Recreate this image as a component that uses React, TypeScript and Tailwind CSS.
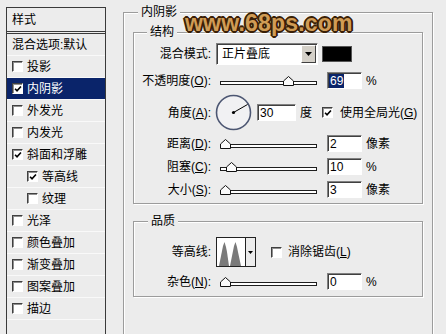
import React from "react";

const FONT = "font-['Liberation_Sans','Noto_Sans_CJK_SC',sans-serif]";

const LIST = [
  { label: "混合选项:默认", box: false },
  { label: "投影", box: true },
  { label: "内阴影", box: true, on: true, sel: true },
  { label: "外发光", box: true },
  { label: "内发光", box: true },
  { label: "斜面和浮雕", box: true, on: true },
  { label: "等高线", box: true, on: true, sub: true },
  { label: "纹理", box: true, sub: true },
  { label: "光泽", box: true },
  { label: "颜色叠加", box: true },
  { label: "渐变叠加", box: true },
  { label: "图案叠加", box: true },
  { label: "描边", box: true },
];

const Check = ({ on }: { on?: boolean }) => (
  <span className="relative inline-flex h-[11px] w-[11px] shrink-0 border border-t-[#404040] border-l-[#404040] border-r-white border-b-white bg-white shadow-[inset_1px_1px_0_#909090]">
    {on && (
      <svg viewBox="0 0 9 9" className="absolute left-[1px] top-[1px] h-[8px] w-[8px]">
        <path d="M1.2 4.2 L3.4 6.6 L7.8 1.6" stroke="#000" strokeWidth="1.8" fill="none" />
      </svg>
    )}
  </span>
);

const NumBox = ({ v, sel, w = 35 }: { v: string; sel?: boolean; w?: number }) => (
  <div
    className="flex h-[17px] items-center border border-t-[#808080] border-l-[#808080] border-r-white border-b-white bg-white pl-[1px] text-[12px] leading-none shadow-[inset_1px_1px_0_#404040]"
    style={{ width: w }}
  >
    <span className={sel ? "bg-[#0a246a] px-[1px] py-[1px] text-white" : "px-[1px]"}>{v}</span>
  </div>
);

const Slider = ({ at }: { at: number }) => (
  <div className="relative ml-[9px] h-[10px] w-[97px] shrink-0">
    <div className="absolute bottom-[1px] left-0 right-0 h-[4px] border border-[#1e1e1e] bg-white" />
    <svg className="absolute bottom-0" style={{ left: at }} width="11" height="10" viewBox="0 0 11 10">
      <path d="M0.5 9.5V5L5.5 0.5L10.5 5V9.5Z" fill="#fafafa" stroke="#111" />
    </svg>
  </div>
);

const Label = ({ children }: { children: React.ReactNode }) => (
  <div className="w-[77px] shrink-0 text-right text-[12px] leading-none whitespace-nowrap">{children}</div>
);

const SliderRow = ({ label, at, v, unit, sel, cls }: { label: React.ReactNode; at: number; v: string; unit: string; sel?: boolean; cls: string }) => (
  <div className={`flex h-[17px] items-center ${cls}`}>
    <Label>{label}</Label>
    <Slider at={at} />
    <div className="ml-[10px]">
      <NumBox v={v} sel={sel} />
    </div>
    <span className="ml-[4px] text-[12px] leading-none">{unit}</span>
  </div>
);

const Legend = ({ text, left }: { text: string; left: string }) => (
  <span className={`absolute top-[-8px] ${left} bg-[#ececec] px-[3px] text-[12px] leading-[14px]`}>{text}</span>
);

const GROUP = "relative border border-[#9c9c9c] shadow-[1px_1px_0_#fff,inset_1px_1px_0_#fff]";

export default function App() {
  return (
    <div className={`relative flex h-[334px] w-[446px] overflow-hidden bg-[#ececec] pl-[6px] pt-[7px] text-black ${FONT}`}>
      {/* style list */}
      <div className="h-[340px] w-[100px] shrink-0 border border-[#3a3a3a] bg-[#ececec]">
        <div className="flex h-[26px] items-center border-b-[3px] border-double border-[#3a3a3a] pl-[5px] text-[12px] leading-none">
          样式
        </div>
        {LIST.map((r) => (
          <div
            key={r.label}
            className={`flex h-[22px] items-center gap-[4px] border-b border-[#f9f9f9] text-[12px] leading-none whitespace-nowrap ${
              r.sel ? "bg-[#0a246a] text-white" : ""
            } ${r.sub ? "pl-[20px]" : "pl-[5px]"}`}
          >
            {r.box && <Check on={r.on} />}
            <span>{r.label}</span>
          </div>
        ))}
      </div>

      {/* inner shadow panel */}
      <div className={`${GROUP} ml-[17px] mt-[5px] h-[340px] w-[310px] shrink-0 pl-[9px] pt-[19px]`}>
        <Legend text="内阴影" left="left-[14px]" />

        <div className={`${GROUP} w-[290px] pb-[5px] pt-[10px]`}>
          <Legend text="结构" left="left-[13px]" />

          <div className="flex h-[22px] items-center">
            <Label>混合模式:</Label>
            <div className="ml-[5px] flex h-[22px] w-[102px] items-center border border-t-[#808080] border-l-[#808080] border-r-white border-b-white bg-white shadow-[inset_1px_1px_0_#404040]">
              <span className="flex-1 pl-[5px] text-[12px] leading-none">正片叠底</span>
              <span className="mr-[1px] flex h-[18px] w-[15px] items-center justify-center border border-t-white border-l-white border-r-[#404040] border-b-[#404040] bg-[#d4d0c8]">
                <svg width="7" height="4" viewBox="0 0 7 4">
                  <path d="M0 0H7L3.5 4Z" fill="#000" />
                </svg>
              </span>
            </div>
            <div className="ml-[4px] h-[16px] w-[30px] border border-[#555] bg-black" />
          </div>

          <SliderRow
            cls="mt-[7px]"
            label={<>不透明度(<u>O</u>):</>}
            at={63}
            v="69"
            sel
            unit="%"
          />

          <div className="mt-[5px] flex h-[37px] items-center">
            <Label>
              角度(<u>A</u>):
            </Label>
            <svg className="ml-[4px] shrink-0" width="37" height="37" viewBox="0 0 37 37">
              <circle cx="18.5" cy="18.5" r="17" fill="#f1f1f3" stroke="#4c5672" strokeWidth="1.6" />
              <line x1="18.5" y1="18.5" x2="32.5" y2="10.5" stroke="#000" strokeWidth="1" />
              <circle cx="18.5" cy="18.5" r="1.6" fill="#000" />
            </svg>
            <div className="ml-[5px]">
              <NumBox v="30" w={39} />
            </div>
            <span className="ml-[4px] text-[12px] leading-none">度</span>
            <span className="ml-[10px] flex items-center">
              <Check on />
            </span>
            <span className="ml-[7px] text-[12px] leading-none whitespace-nowrap">
              使用全局光(<u>G</u>)
            </span>
          </div>

          <SliderRow cls="mt-[4px]" label={<>距离(<u>D</u>):</>} at={0} v="2" unit="像素" />
          <SliderRow cls="mt-[6px]" label={<>阻塞(<u>C</u>):</>} at={6} v="10" unit="%" />
          <SliderRow cls="mt-[6px]" label={<>大小(<u>S</u>):</>} at={0} v="3" unit="像素" />
        </div>

        <div className={`${GROUP} mt-[17px] w-[290px] pb-[6px] pt-[15px]`}>
          <Legend text="品质" left="left-[14px]" />

          <div className="flex h-[30px] items-center">
            <Label>等高线:</Label>
            <div className="ml-[5px] flex h-[30px] items-stretch border border-[#222]">
              <svg width="28" height="28" viewBox="0 0 28 28" className="bg-white">
                <path d="M2 28 L5 13 L6 8 L7.5 4 L9 9 L10 14 L12 28Z" fill="#7a7a7a" />
                <path d="M13 28 L16 13 L17 8 L18.5 4 L20 9 L21 14 L24 28Z" fill="#7a7a7a" />
              </svg>
              <span className="flex w-[10px] items-center justify-center border-l border-[#222] bg-[#ececec]">
                <svg width="5" height="3" viewBox="0 0 5 3">
                  <path d="M0 0H5L2.5 3Z" fill="#000" />
                </svg>
              </span>
            </div>
            <span className="ml-[15px] flex items-center">
              <Check />
            </span>
            <span className="ml-[6px] text-[12px] leading-none whitespace-nowrap">
              消除锯齿(<u>L</u>)
            </span>
          </div>

          <SliderRow cls="mt-[6px]" label={<>杂色(<u>N</u>):</>} at={0} v="0" unit="%" />
        </div>
      </div>

      {/* watermark */}
      <div className="pointer-events-none absolute left-[185px] top-[6px] font-['Liberation_Sans',sans-serif] text-[23px] font-bold tracking-[0.2px] text-[#d09c55] [text-shadow:1px_1px_0_#3a1f06,-1px_-1px_0_#3a1f06,1px_-1px_0_#3a1f06,-1px_1px_0_#3a1f06,2px_0_0_#3a1f06,-2px_0_0_#3a1f06,0_2px_0_#3a1f06,0_-2px_0_#3a1f06,0_0_4px_#fff]">
        www.68ps.com
      </div>
    </div>
  );
}
